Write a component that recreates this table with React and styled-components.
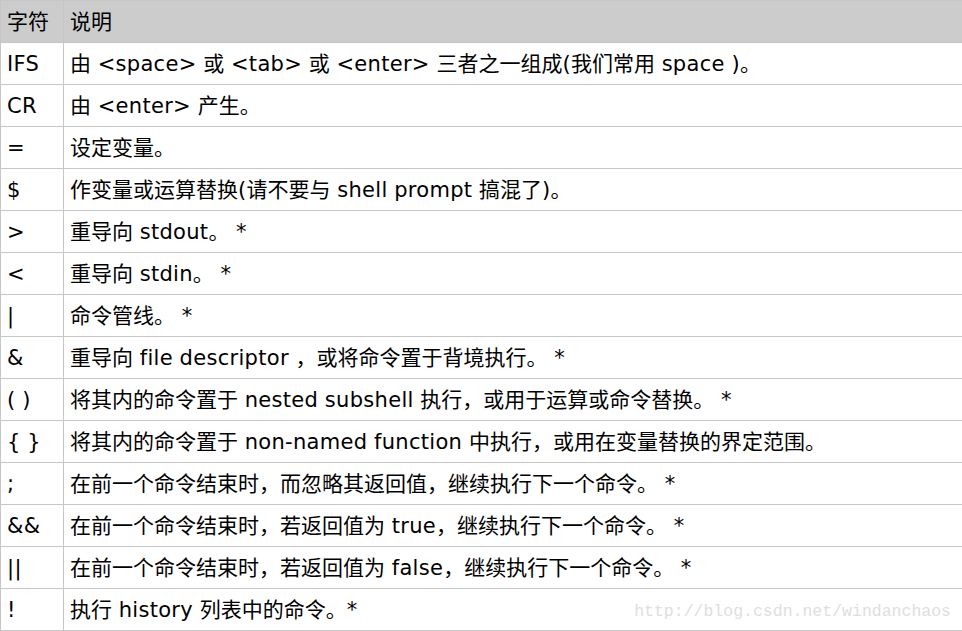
import styled, { createGlobalStyle } from 'styled-components'

const GlobalStyle = createGlobalStyle`
  html, body {
    margin: 0;
    padding: 0;
    background: #fff;
    overflow: hidden;
  }
`

const rows = [
  ['IFS', '由 <space> 或 <tab> 或 <enter> 三者之一组成(我们常用 space )。'],
  ['CR', '由 <enter> 产生。'],
  ['=', '设定变量。'],
  ['$', '作变量或运算替换(请不要与 shell prompt 搞混了)。'],
  ['>', '重导向 stdout。 *'],
  ['<', '重导向 stdin。 *'],
  ['|', '命令管线。 *'],
  ['&', '重导向 file descriptor ，或将命令置于背境执行。 *'],
  ['( )', '将其内的命令置于 nested subshell 执行，或用于运算或命令替换。 *'],
  ['{ }', '将其内的命令置于 non-named function 中执行，或用在变量替换的界定范围。'],
  [';', '在前一个命令结束时，而忽略其返回值，继续执行下一个命令。 *'],
  ['&&', '在前一个命令结束时，若返回值为 true，继续执行下一个命令。 *'],
  ['||', '在前一个命令结束时，若返回值为 false，继续执行下一个命令。 *'],
  ['!', '执行 history 列表中的命令。*'],
]

// latin runs are set a bit wider, the way Verdana looks next to the CJK glyphs
const Mixed = ({ text }) =>
  text.split(/([\u0021-\u02ff]+)/).map((part, i) =>
    i % 2 ? <Latin key={i}>{part}</Latin> : part
  )

export default function App() {
  return (
    <Page>
      <GlobalStyle />
      <Table>
        <colgroup>
          <col style={{ width: 63 }} />
          <col />
        </colgroup>
        <thead>
          <tr>
            <Head>字符</Head>
            <Head>说明</Head>
          </tr>
        </thead>
        <tbody>
          {rows.map(([sym, desc]) => (
            <tr key={sym}>
              <Cell><Mixed text={sym} /></Cell>
              <Cell><Mixed text={desc} /></Cell>
            </tr>
          ))}
        </tbody>
      </Table>
      <Watermark>http://blog.csdn.net/windanchaos</Watermark>
    </Page>
  )
}

const Page = styled.div`
  position: relative;
  width: 962px;
  height: 631px;
  overflow: hidden;
`

const Table = styled.table`
  border-collapse: collapse;
  table-layout: fixed;
  width: 963px;
  font-family: "DejaVu Sans", "Noto Sans CJK SC", sans-serif;
  font-size: 21px;
  color: #000;
`

const Latin = styled.span`
  letter-spacing: 0.3px;
`

const Cell = styled.td`
  box-sizing: border-box;
  height: 42px;
  padding: 0 6px;
  border: 1px solid #c6c6c6;
  vertical-align: middle;
  white-space: nowrap;
  line-height: 24px;
`

const Head = styled(Cell).attrs({ as: 'th' })`
  background: #cccccc;
  font-weight: normal;
  text-align: left;
`

const Watermark = styled.div`
  position: absolute;
  right: 11px;
  bottom: 10px;
  font-family: "Liberation Mono", "DejaVu Sans Mono", monospace;
  font-size: 16.5px;
  color: #dedede;
  pointer-events: none;
`
